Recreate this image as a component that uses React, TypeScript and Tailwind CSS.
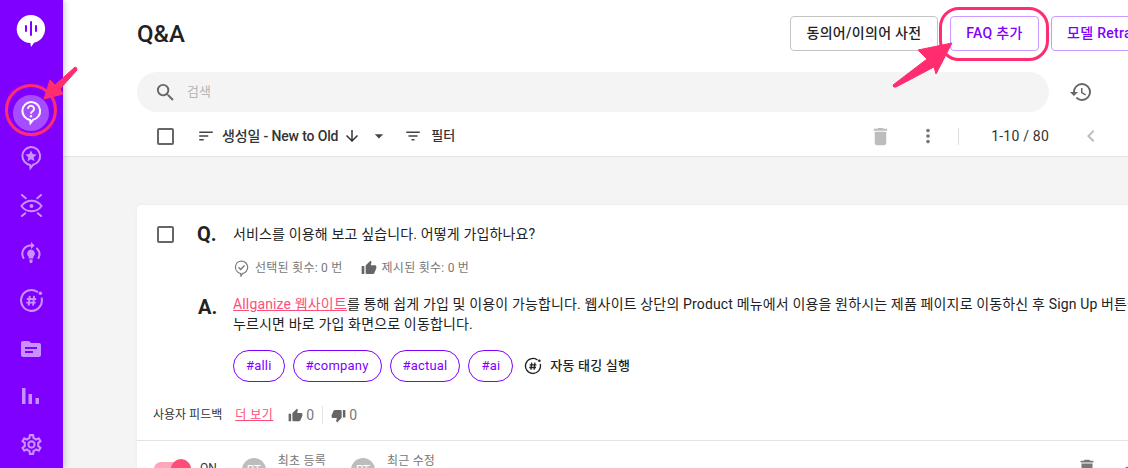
import React from "react";
import {
  MdArrowDownward,
  MdArrowDropDown,
  MdChevronLeft,
  MdDelete,
  MdFilterList,
  MdHistory,
  MdMoreVert,
  MdOutlineSettings,
  MdSearch,
  MdSort,
  MdThumbDown,
  MdThumbUp,
  MdTopic,
} from "react-icons/md";

const font = "font-['Roboto','Noto_Sans_CJK_KR',sans-serif]";

function Checkbox() {
  return <div className="w-[17px] h-[17px] rounded-[2px] border-2 border-[#666] shrink-0" />;
}

function LogoIcon() {
  return (
    <svg width="30" height="34" viewBox="0 0 30 34">
      <path d="M15 1a14 14 0 0 1 3 27.7L15 33l-.6-4A14 14 0 0 1 15 1z" fill="#fff" />
      <path d="M15 8v13M10 12v5M20 12v5" stroke="#8000ff" strokeWidth="2" strokeLinecap="round" />
    </svg>
  );
}

function QuestionIcon() {
  return (
    <svg width="22" height="26" viewBox="0 0 22 26" fill="none">
      <path d="M11 2a9 9 0 0 1 2 17.8L10.5 23l-.4-3.1A9 9 0 0 1 11 2z" stroke="#fff" strokeWidth="2" />
      <path d="M8 8.8a3 3 0 1 1 4.6 2.5c-1 .7-1.6 1.2-1.6 2.4" stroke="#fff" strokeWidth="1.9" />
      <circle cx="11" cy="16.2" r="1.2" fill="#fff" />
    </svg>
  );
}

function StarIcon() {
  return (
    <svg width="22" height="26" viewBox="0 0 22 26" fill="none">
      <path d="M11 2a9 9 0 0 1 2 17.8L10.5 23l-.4-3.1A9 9 0 0 1 11 2z" stroke="#c792ff" strokeWidth="2" />
      <path d="M11 5.5l1.7 3.6 3.9.5-2.9 2.7.8 3.9-3.5-2-3.5 2 .8-3.9-2.9-2.7 3.9-.5z" fill="#c792ff" />
    </svg>
  );
}

function EyeIcon() {
  return (
    <svg width="23" height="23" viewBox="0 0 24 24" fill="none" stroke="#c792ff" strokeWidth="2">
      <path d="M1.5 12.5C4 9 7.5 7 12 7s8 2 10.500 5.500C20 16 16.500 18 12 18s-8-2-10.500-5.500z" />
      <circle cx="12" cy="12.500" r="2" fill="#c792ff" stroke="none" />
      <path d="M2 1l4 3.500M22 1l-4 3.500M2 23l3.500-3M22 23l-3.500-3" strokeLinecap="round" />
    </svg>
  );
}

function BulbIcon() {
  return (
    <svg width="20" height="22" viewBox="0 0 20 22" fill="none">
      <path d="M2.500 16A8.300 8.300 0 0 1 10 3.500h2M17.500 16a8.300 8.300 0 0 0-1.500-9.500" stroke="#c792ff" strokeWidth="2" strokeLinecap="round" />
      <path d="M10 0l3.500 3.500L10 7z" fill="#c792ff" />
      <path d="M10 7.500a4 4 0 0 1 2.500 7l-.3 2H7.800l-.3-2A4 4 0 0 1 10 7.500zM8.300 17.500h3.400L11.200 21H8.800z" fill="#c792ff" />
    </svg>
  );
}

function HashCircle({ color, size, strokeWidth }: { color: string; size: number; strokeWidth: number }) {
  return (
    <svg width={size} height={size} viewBox="0 0 24 24" fill="none">
      <path d="M17.500 3.600A10 10 0 1 0 21.800 10" stroke={color} strokeWidth={strokeWidth} strokeLinecap="round" />
      <circle cx="20.500" cy="5" r="1.700" fill={color} />
      <path d="M10.300 7.500l-1 9.500M14.500 7.500l-1 9.500M7.500 10.500h9M7 14h9" stroke={color} strokeWidth="1.800" />
    </svg>
  );
}

function BarsIcon() {
  return (
    <svg width="18" height="16" viewBox="0 0 18 16" fill="#c792ff">
      <rect x="0" y="0" width="3.500" height="16" />
      <rect x="6.500" y="6" width="3.500" height="10" />
      <rect x="13.500" y="10" width="3.500" height="6" />
    </svg>
  );
}

function CheckBubble() {
  return (
    <svg width="15" height="17" viewBox="0 0 15 17" fill="none" stroke="#777" strokeWidth="1.200">
      <path d="M7.500 1a6.300 6.300 0 0 1 1 12.500L7 16l-.3-2.500A6.300 6.300 0 0 1 7.500 1z" />
      <path d="M4.500 7.300l2.200 2.200 3.800-4" strokeWidth="1.300" />
    </svg>
  );
}

function Sidebar() {
  return (
    <aside className="w-[63px] shrink-0 bg-[#8000ff] flex flex-col items-center pt-[13px] pr-px z-10 shadow-[2px_0_6px_rgba(0,0,0,0.18)]">
      <div className="h-[36px] flex items-center justify-center">
        <LogoIcon />
      </div>
      <div className="mt-[46px] w-[36px] h-[36px] rounded-full bg-[#a64dff] flex items-center justify-center">
        <QuestionIcon />
      </div>
      <div className="mt-[3px] h-[48px] flex items-center justify-center"><StarIcon /></div>
      <div className="h-[48px] flex items-center justify-center"><EyeIcon /></div>
      <div className="h-[48px] flex items-center justify-center"><BulbIcon /></div>
      <div className="h-[48px] flex items-center justify-center"><HashCircle color="#c792ff" size={25} strokeWidth={2} /></div>
      <div className="h-[48px] flex items-center justify-center"><MdTopic size={24} color="#c792ff" /></div>
      <div className="h-[48px] flex items-center justify-center"><BarsIcon /></div>
      <div className="h-[48px] flex items-center justify-center"><MdOutlineSettings size={25} color="#c792ff" /></div>
    </aside>
  );
}

function Header() {
  return (
    <header className="h-[157px] shrink-0 bg-white border-b border-[#e3e3e3] pl-[74px]">
      <div className="flex items-center pt-[16px] h-[51px]">
        <h1 className="w-[653px] shrink-0 text-[24px] font-medium text-[#222]">Q&amp;A</h1>
        <div className="flex gap-3 shrink-0 text-[14px] font-medium tracking-[0.3px]">
          <button className="w-[148px] h-[35px] rounded border border-[#c4c4c4] text-[#222]">동의어/이의어 사전</button>
          <button className="w-[89px] h-[35px] rounded border border-[#c79bff] text-[#8000ff]">FAQ 추가</button>
          <button className="w-[130px] h-[35px] rounded border border-[#c79bff] text-[#8000ff] text-left pl-[15px] whitespace-nowrap">모델 Retrain</button>
        </div>
      </div>
      <div className="flex items-center mt-[21px]">
        <div className="w-[912px] h-[40px] shrink-0 rounded-full bg-[#f4f4f4] flex items-center pl-[17px]">
          <MdSearch size={23} color="#666" />
          <span className="ml-[10px] text-[13px] text-[#b5b5b5]">검색</span>
        </div>
        <MdHistory size={24} color="#666" className="ml-[20px]" />
      </div>
      <div className="flex items-center mt-[14px] h-[20px] w-[1000px]">
        <div className="ml-[20px]"><Checkbox /></div>
        <MdSort size={18} color="#444" className="ml-[23px]" />
        <span className="ml-[7px] text-[14px] tracking-[-0.15px] font-medium text-[#333] whitespace-nowrap">생성일 - New to Old</span>
        <MdArrowDownward size={18} color="#333" className="ml-[5px]" />
        <MdArrowDropDown size={20} color="#444" className="ml-[8px]" />
        <MdFilterList size={18} color="#444" className="ml-[15px]" />
        <span className="ml-[9px] text-[13px] font-medium text-[#333]">필터</span>
        <MdDelete size={23} color="#bdbdbd" className="ml-[414px]" />
        <MdMoreVert size={22} color="#777" className="ml-[25px]" />
        <div className="ml-[19px] w-px h-[17px] bg-[#ddd]" />
        <span className="ml-[32px] text-[14px] tracking-[0.2px] text-[#333] whitespace-nowrap">1-10 / 80</span>
        <MdChevronLeft size={24} color="#bdbdbd" className="ml-[30px]" />
      </div>
    </header>
  );
}

function Tag({ label }: { label: string }) {
  return (
    <span className="h-[32px] px-[12px] rounded-full border border-[#8000ff] text-[13px] tracking-[0.2px] text-[#8000ff] flex items-center">{label}</span>
  );
}

function Card() {
  return (
    <section className="ml-[74px] mt-[48px] w-[1100px] bg-white rounded shadow-[0_0_3px_rgba(0,0,0,0.06)]">
      <div className="pl-[20px] pt-[18px]">
        <div className="flex items-center h-[22px]">
          <Checkbox />
          <span className="ml-[23px] w-[36px] text-[20px] font-bold text-[#222]">Q.</span>
          <p className="text-[14px] tracking-[0.15px] text-[#222] whitespace-nowrap">서비스를 이용해 보고 싶습니다. 어떻게 가입하나요?</p>
        </div>
        <div className="flex items-center mt-[13px] h-[20px] ml-[77px] text-[12px] tracking-[0.25px] text-[#777]">
          <CheckBubble />
          <span className="ml-[6px]">선택된 횟수: 0 번</span>
          <MdThumbUp size={16} color="#666" className="ml-[18px]" />
          <span className="ml-[5px]">제시된 횟수: 0 번</span>
        </div>
        <div className="flex mt-[16px]">
          <span className="ml-[41px] w-[35px] text-[20px] font-bold text-[#222] leading-[26px]">A.</span>
          <p className="text-[14px] tracking-[0.15px] leading-[20px] text-[#222] whitespace-nowrap">
            <a className="text-[#ff4d79] underline">Allganize 웹사이트</a>를 통해 쉽게 가입 및 이용이 가능합니다. 웹사이트 상단의 Product 메뉴에서 이용을 원하시는 제품 페이지로 이동하신 후 Sign Up 버튼을
            <br />
            누르시면 바로 가입 화면으로 이동합니다.
          </p>
        </div>
        <div className="flex items-center gap-[8px] mt-[16px] ml-[76px]">
          <Tag label="#alli" />
          <Tag label="#company" />
          <Tag label="#actual" />
          <Tag label="#ai" />
          <div className="ml-[3px]"><HashCircle color="#222" size={18} strokeWidth={1.800} /></div>
          <span className="text-[13px] tracking-[0.2px] font-medium text-[#222] whitespace-nowrap">자동 태깅 실행</span>
        </div>
      </div>
      <div className="flex items-center h-[20px] mt-[23px] pl-[16px]">
        <span className="text-[12px] text-[#333]">사용자 피드백</span>
        <a className="ml-[13px] text-[#ff4d79] underline text-[12px] tracking-[0.5px]">더 보기</a>
        <MdThumbUp size={15} color="#666" className="ml-[15px]" />
        <span className="ml-[3px] text-[14px] text-[#777]">0</span>
        <div className="ml-[8px] w-px h-[18px] bg-[#e3e3e3]" />
        <MdThumbDown size={15} color="#666" className="ml-[8px]" />
        <span className="ml-[3px] text-[14px] text-[#777]">0</span>
      </div>
      <div className="border-t border-[#e3e3e3] mt-[15px] flex items-start h-[60px] pl-[17px]">
        <div className="relative mt-[21px] w-[37px] h-[14px] rounded-full bg-[#ffa6bc]">
          <div className="absolute right-0 -top-[3px] w-[20px] h-[20px] rounded-full bg-[#ff4d79]" />
        </div>
        <span className="ml-[9px] mt-[18px] text-[12px] text-[#333]">ON</span>
        <div className="ml-[25px] mt-[17px] w-[24px] h-[24px] shrink-0 rounded-full bg-[#bdbdbd] text-white text-[12px] flex items-center justify-center">RT</div>
        <span className="ml-[12px] mt-[11px] text-[12px] tracking-[0.2px] text-[#777] whitespace-nowrap">최초 등록</span>
        <div className="ml-[25px] mt-[17px] w-[24px] h-[24px] shrink-0 rounded-full bg-[#bdbdbd] text-white text-[12px] flex items-center justify-center">RT</div>
        <span className="ml-[12px] mt-[11px] text-[12px] tracking-[0.2px] text-[#777] whitespace-nowrap">최근 수정</span>
        <MdDelete size={22} color="#777" className="ml-[641px] mt-[16px]" />
        <MdMoreVert size={22} color="#777" className="ml-[18px] mt-[22px]" />
      </div>
    </section>
  );
}

function Overlays() {
  return (
    <>
      <div className="absolute left-[5px] top-[84px] w-[52px] h-[52px] rounded-full border-[3px] border-[#ff2d6f] z-20" />
      <div className="absolute left-[939px] top-[7px] w-[110px] h-[54px] rounded-[20px] border-[3px] border-[#ff2d6f] z-20" />
      <svg className="absolute left-0 top-0 z-20 pointer-events-none" width="1128" height="468">
        <path d="M44 99L50 80L55 85L75 67Q77 67 77 70L60 89L63 94Z" fill="#ff2d6f" stroke="#ff2d6f" strokeLinejoin="round" />
        <path d="M952 43L918 50L927 59L893 85Q893 88 896 87L934 67L936 74Z" fill="#ff2d6f" stroke="#ff2d6f" strokeLinejoin="round" />
      </svg>
    </>
  );
}

export default function App() {
  return (
    <div className={`relative w-[1128px] h-[468px] overflow-hidden flex bg-[#f4f4f4] ${font}`}>
      <Sidebar />
      <main className="flex-1 min-w-0 flex flex-col">
        <Header />
        <Card />
      </main>
      <Overlays />
    </div>
  );
}
